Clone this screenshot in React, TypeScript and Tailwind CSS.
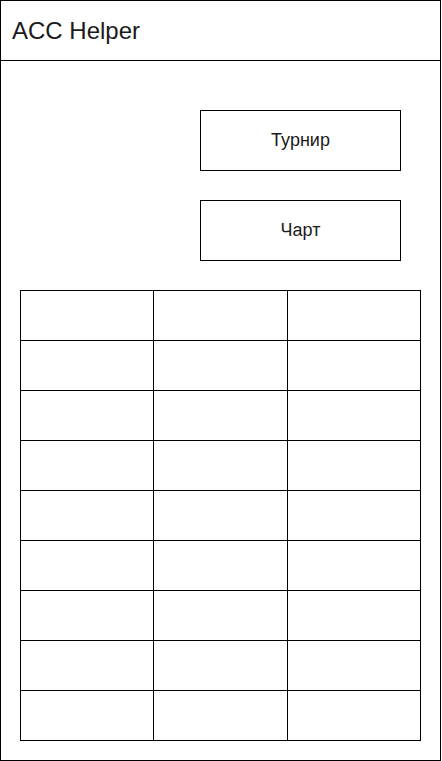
export default function App() {
    const rows = Array.from({length: 9});
    const cols = ["w-[133px]", "w-[134px]", "w-[133px]"];

    return (
        <div className="w-[441px] h-[761px] border border-black bg-white font-['Liberation_Sans',Arial,sans-serif] text-[#1a1a1a]">
            {/* Header */}
            <header className="h-[60px] border-b border-black flex items-center pl-[11px]">
                <h1 className="text-[24px] leading-none">ACC Helper</h1>
            </header>

            {/* Buttons */}
            <div className="ml-[199px] mt-[49px] flex flex-col gap-[29px]">
                <button className="w-[201px] h-[61px] border border-black text-[18px] leading-none pb-[2px]">Турнир</button>
                <button className="w-[201px] h-[61px] border border-black text-[18px] leading-none pb-[2px]">Чарт</button>
            </div>

            {/* Table */}
            <div className="ml-[19px] mt-[29px] w-[401px] grid grid-cols-[133px_134px_133px] border-t border-l border-black">
                {rows.map((_, r) =>
                    cols.map((w, c) => (
                        <div key={`${r}-${c}`} className={`${w} h-[50px] border-r border-b border-black`} />
                    ))
                )}
            </div>
        </div>
    );
}
